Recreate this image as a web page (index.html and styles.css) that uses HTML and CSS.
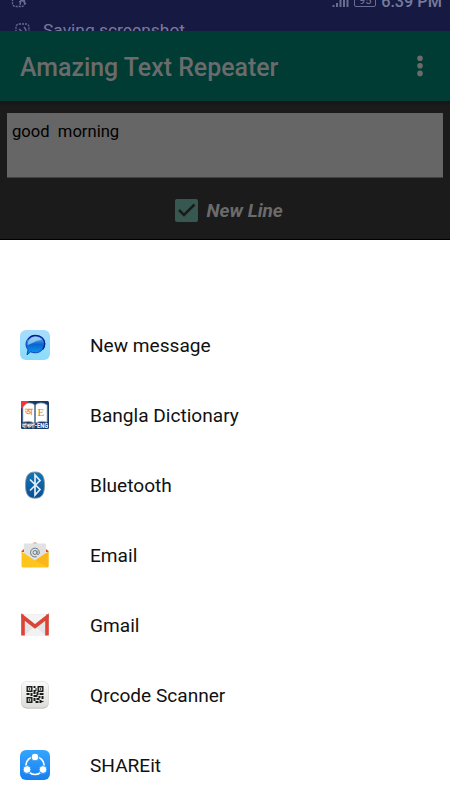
FILE: index.html
```html
<!DOCTYPE html>
<html lang="en">
<head>
<meta charset="utf-8">
<title>Amazing Text Repeater</title>
<link rel="stylesheet" href="styles.css">
</head>
<body>
<div class="status">
  <div class="status-row">
    <svg class="shot-icon" width="17" height="17" viewBox="0 0 17 17"><rect x="1.500" y="1.500" width="12" height="14" rx="3" stroke-dasharray="2 1"/><path d="M7 5l8 8M16 7l-8 4M10 9l-1 5M12 10l3-3"/></svg>
    <div class="system">
      <svg width="18" height="14" viewBox="0 0 18 14"><path d="M1.500 14v-2M5 14v-4M8.500 14V7M12 14V4M15.500 14V1" stroke-width="2"/></svg>
      <span class="battery">95</span>
      <span class="clock">6:39 PM</span>
    </div>
  </div>
  <div class="ticker">
    <svg width="16" height="17" viewBox="0 0 16 17"><rect x="1" y="1" width="13" height="14" rx="3" stroke-dasharray="2 1"/><path d="M4 6l7 6M9 4q4 4 0 9"/></svg>
    <span>Saving screenshot</span>
  </div>
</div>
<header class="appbar">
  <h1>Amazing Text Repeater</h1>
  <svg width="6" height="22" viewBox="0 0 6 22"><circle cx="3" cy="3.200" r="2.800"/><circle cx="3" cy="10.800" r="2.800"/><circle cx="3" cy="18.400" r="2.800"/></svg>
</header>
<main class="editor">
  <div class="field">good&nbsp; morning</div>
  <div class="option">
    <svg width="23" height="23" viewBox="0 0 23 23"><rect width="23" height="23" rx="2" fill="#365850"/><path d="M4 11l5 5L19.500 5.500" fill="none" stroke="#1b1b1b" stroke-width="2.500"/></svg>
    <span>New Line</span>
  </div>
</main>
<ul class="sheet">
  <li><svg viewBox="0 0 30 30"><defs><linearGradient id="sky" x2="0" y2="1"><stop stop-color="#a9dcff"/><stop offset="1" stop-color="#8bdcf9"/></linearGradient><linearGradient id="bubble" x2="0" y2="1"><stop stop-color="#8ccaf3"/><stop offset=".45" stop-color="#0865d1"/><stop offset="1" stop-color="#119bf2"/></linearGradient></defs><rect width="30" height="30" rx="6" fill="url(#sky)"/><path d="M15.500 5.500c5.300 0 9.200 3.500 9.200 8.300s-4 9-9.400 9c-2 0-3.400-.4-4.800-1L7 24.800l1-5c-1.300-1.500-2-3.500-2-5.600 0-5 4.200-8.700 9.500-8.700z" fill="url(#bubble)" stroke="#0b48b4"/><path d="M8 9.500c1.800-2.700 4.500-4 7.500-4 5.300 0 9.200 3.500 9.200 8.300 0 2-.7 4-1.900 5.500" fill="none" stroke="#002191" stroke-width="1.300"/><path d="M7.500 15c0-5 4-8 8-8 3 0 5 1.300 6 3-5-.5-9 4-14 5z" fill="#b5def8" opacity=".65"/></svg><span>New message</span></li>
  <li><svg viewBox="0 0 30 30"><rect x="1" y="1" width="28" height="28" rx="1.500" fill="#173968"/><path d="M3 5q6-4 12 0 6-4 12 0v17q-6-2-12 1-6-3-12-1z" fill="#fff" stroke="#a9b9cc" stroke-width=".8"/><path d="M15 4v19" stroke="#173968" stroke-width="1.200"/><path d="M1 1h8L1 9z" fill="#ee3541"/><text x="5" y="15" font-size="9" fill="#ef8a24" font-weight="bold" class="bangla">অ</text><text x="17.500" y="15.500" font-size="11" fill="#d9802f" class="serif">E</text><text x="15" y="28.200" font-size="7" text-anchor="middle" textLength="26" lengthAdjust="spacingAndGlyphs" font-weight="bold" fill="#fff">বাংলা-ENG</text></svg><span>Bangla Dictionary</span></li>
  <li><svg viewBox="0 0 30 30"><defs><linearGradient id="bt" x2="0" y2="1"><stop stop-color="#1476b7"/><stop offset="1" stop-color="#064f96"/></linearGradient></defs><path d="M15 2c7 0 9.500 4 9.500 13S22 28.200 15 28.200 5.500 24 5.500 15 8 2 15 2z" fill="url(#bt)" stroke="#8996a2" stroke-width=".9"/><path d="M10 9.500l10 10-5 5.500V5l5 5.500-10 10" fill="none" stroke="#e7eef5" stroke-width="1.700"/></svg><span>Bluetooth</span></li>
  <li><svg viewBox="0 0 30 30"><path d="M1.500 12v-1l2.500-2h22l2.500 2v1zM12.500 3.500q2.500-2 5 0z" fill="#db5230"/><path d="M4 4.500q0-1 1-1h20q1 0 1 1V22H4z" fill="#e2e2e2"/><path d="M1.500 11.500L15 20.500l13.500-9V26q0 1.500-1.500 1.500H3q-1.500 0-1.500-1.500z" fill="#fdc51e"/><path d="M15 20.500l13.500-9V26q0 1-.7 1.300z" fill="#fbb719"/><circle cx="15" cy="12.500" r="2" fill="none" stroke="#657985"/><path d="M17 10.500v3q0 1.300 1.200 1.100 1.300-.3 1.100-2.800a4.400 4.400 0 1 0-2.600 4.800" fill="none" stroke="#657985"/></svg><span>Email</span></li>
  <li><svg viewBox="0 0 30 30"><rect x="1.200" y="4.500" width="27.600" height="21" rx="1.500" fill="#e4e4e4"/><path d="M4.500 25.500L15 16l10.500 9.500z" fill="#f2f2f2"/><path d="M4 5h22L15 14z" fill="#f4f4f4"/><path d="M3 25.500V7l12 9.500L27 7v18.500" fill="none" stroke="#db4437" stroke-width="3.600"/><path d="M1.200 8V6q0-1.500 1.500-1.500H4L1.200 8zM28.800 8V6q0-1.500-1.500-1.500H26z" fill="#db4437"/></svg><span>Gmail</span></li>
  <li><svg viewBox="0 0 30 30"><defs><linearGradient id="qr" x2="0" y2="1"><stop stop-color="#fafaf8"/><stop offset="1" stop-color="#dcddd8"/></linearGradient></defs><rect x="1.500" y="2" width="27" height="26.500" rx="5" fill="#aaa9a5"/><rect x="1.500" y="1.500" width="27" height="26" rx="5" fill="url(#qr)" stroke="#dedcd7" stroke-width=".6"/><g transform="translate(6.500 6)" fill="#171b19"><path fill-rule="evenodd" d="M0 0h6v6H0zM1.400 1.400v3.200h3.200V1.400zM11 0h6v6h-6zM12.400 1.400v3.200h3.200V1.400zM0 11h6v6H0zM1.400 12.400v3.200h3.200v-3.200z"/><path d="M2.300 2.300h1.400v1.400H2.300zM13.300 2.300h1.400v1.400h-1.400zM2.300 13.300h1.400v1.400H2.300zM7 0h2v2H7zM9 2h1v3H9zM7 4h2v4H7zM0 7h3v2H0zM4 7h2v3H4zM7 9h4v2H7zM10 6h2v3h-2zM13 7h4v2h-4zM12 10h2v2h-2zM15 10h2v3h-2zM7 12h2v3H7zM10 12h3v2h-3zM9 15h3v2H9zM13 14h2v3h-2zM15 15h2v1h-2z"/></g></svg><span>Qrcode Scanner</span></li>
  <li><svg viewBox="0 0 30 30"><defs><linearGradient id="share" x2="0" y2="1"><stop stop-color="#35a5ff"/><stop offset="1" stop-color="#197fed"/></linearGradient></defs><rect width="30" height="30" rx="6" fill="url(#share)"/><circle cx="15" cy="15.500" r="9" fill="none" stroke="#fff" stroke-width="1.600"/><g fill="#fff" stroke="#2998fa" stroke-width="1"><circle cx="15" cy="7" r="3.900"/><circle cx="7" cy="19.500" r="3.900"/><circle cx="23" cy="19.500" r="3.900"/></g></svg><span>SHAREit</span></li>
</ul>
</body>
</html>
```

FILE: styles.css
```css
* { box-sizing: border-box; }
body { margin: 0; width: 450px; height: 800px; overflow: hidden; background: #fff; font-family: Roboto, "Noto Sans", sans-serif; }
.status { height: 31px; overflow: hidden; background: #161a43; color: #787b9a; }
.status svg { fill: none; stroke: #696d91; stroke-width: 1.3; flex: none; }
.status-row { display: flex; justify-content: space-between; align-items: flex-end; height: 20px; margin-top: -11px; padding: 0 8px 0 11px; }
.status-row .shot-icon { margin-bottom: 1px; }
.system { display: flex; align-items: flex-end; height: 20px; padding-bottom: 2px; }
.battery { width: 22px; height: 14px; margin-left: 4px; border: 1.5px solid #696d91; border-radius: 2px; font-size: 11px; line-height: 13px; text-align: center; }
.clock { margin-left: 5px; font-size: 16.3px; font-weight: 500; line-height: 19px; height: 15px; white-space: nowrap; }
.ticker { display: flex; padding: 13px 0 0 15px; gap: 12px; font-size: 17.4px; line-height: 20px; }
.ticker svg { margin-top: 1px; }
.ticker span { margin-top: -2px; }
.appbar { display: flex; justify-content: space-between; align-items: center; height: 70px; padding: 0 27px 0 20px; background: #003c34; color: #6b6b6b; }
.appbar h1 { margin: 3px 0 0; font-size: 24.9px; line-height: 30px; font-weight: 500; }
.appbar svg { fill: #6b6b6b; }
.editor { height: 139px; padding: 12px 7px 0; background: linear-gradient(#151515, #1b1b1b 6px); border-bottom: 1px solid #000; }
.field { height: 65px; padding: 9px 5px; background: #666; border: 0 solid #414141; border-bottom-width: 1px; color: #000; font-size: 16.6px; line-height: 20px; }
.option { display: flex; align-items: center; height: 23px; margin: 21px 0 0 168px; gap: 8.5px; color: #6b6b6b; font-size: 19px; font-weight: bold; font-style: italic; }
.option span { margin-top: 0; }
.sheet { list-style: none; margin: 0; padding: 70px 20px 0; }
.sheet li { display: flex; align-items: center; height: 70px; gap: 40px; color: #111; font-size: 19.1px; line-height: 24px; }
.sheet svg { width: 30px; height: 30px; flex: none; }
.sheet span { margin-top: 2px; }
.bangla { font-family: "Noto Sans", sans-serif; }
.serif { font-family: "Liberation Serif", serif; }
```
